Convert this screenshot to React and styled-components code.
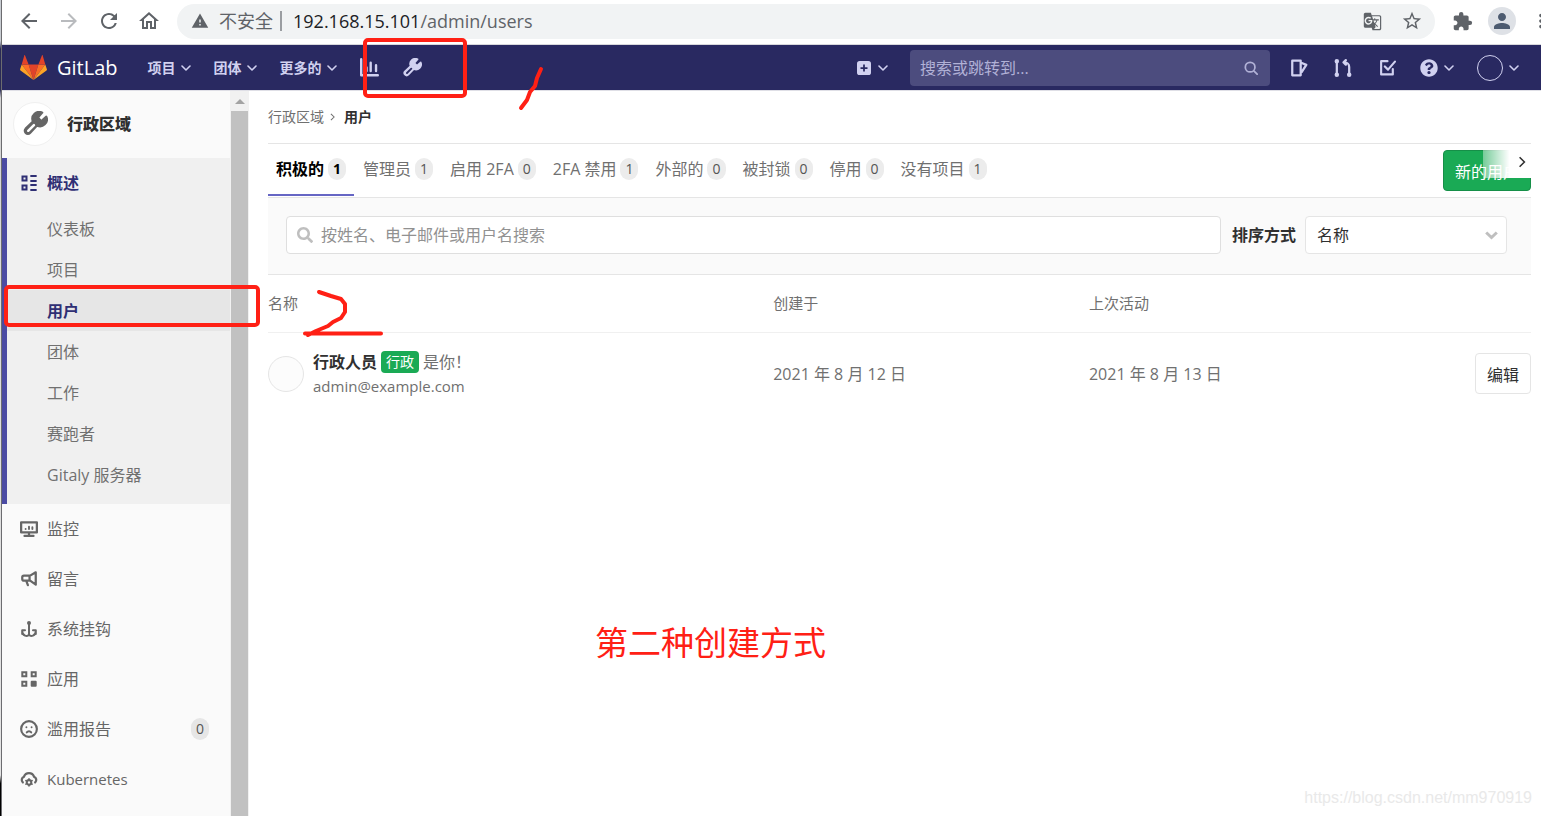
import React, { Component } from 'react';
import styled, { createGlobalStyle } from 'styled-components';
import {
    MdArrowBack, MdArrowForward, MdRefresh, MdOutlineHome, MdWarning,
    MdGTranslate, MdStarBorder, MdExtension, MdPerson, MdMoreVert
} from 'react-icons/md';
import { FaSearch, FaQuestionCircle } from 'react-icons/fa';

const GlobalStyle = createGlobalStyle`
    * { box-sizing: border-box; }
    body {
        margin: 0;
        font-family: "Open Sans", "Noto Sans CJK SC", sans-serif;
        font-size: 16px;
        line-height: 24px;
        color: #303030;
        background: #fff;
    }
    button, input, select { font: inherit; }
    a { color: inherit; text-decoration: none; }
    svg { display: block; flex: none; }
`;

const Page = styled.div`
    position: relative;
    display: flex;
    min-height: 100vh;
    overflow: hidden;
`;

const WindowEdge = styled.div`
    width: 2px;
    flex: none;
    border-right: 1px solid #6c6c70;
    background: linear-gradient(#c9cdd2 5%, #2a2a55 6%, #2a2a55 11%, #d4d4d4 12%, #e4e4e4 95%, #000 96%);
`;

const Screen = styled.div`
    flex: 1;
    min-width: 0;
    display: flex;
    flex-direction: column;
`;

/* browser toolbar */

const BrowserBar = styled.div`
    display: flex;
    align-items: center;
    height: 45px;
    padding: 0 0 2px 15px;
    border-bottom: 1px solid #d8d8dc;
    color: #5f6368;
`;

const BrowserButton = styled.button`
    display: flex;
    padding: 0;
    margin-right: ${ props => props.gap || 16 }px;
    border: 0;
    background: none;
    color: ${ props => props.faded ? '#b9bbbe' : '#5f6368' };
`;

const AddressBar = styled.div`
    flex: 1;
    display: flex;
    align-items: center;
    height: 35px;
    margin-right: 17px;
    padding: 0 11px 0 14px;
    border-radius: 18px;
    background: #f1f3f4;
    font-size: 18px;
`;

const Insecure = styled.span`
    margin-left: 10px;
    padding-right: 7px;
    border-right: 2px solid #9a9da1;
    line-height: 20px;
`;

const Url = styled.span`
    flex: 1;
    margin-left: 11px;

    b {
        font-weight: 400;
        color: #202124;
    }
`;

const Profile = styled.button`
    display: flex;
    align-items: center;
    justify-content: center;
    width: 28px;
    height: 28px;
    margin: 0 22px 0 0;
    padding: 0;
    border: 0;
    border-radius: 50%;
    background: #dee1e6;
    color: #4d5b70;
`;

const MoreClip = styled.div`
    width: 3px;
    overflow: hidden;

    svg { margin-left: -8px; }
`;

/* top navigation */

const NavBar = styled.header`
    display: flex;
    align-items: center;
    height: 46px;
    padding: 0 21px 0 18px;
    background: #292961;
    border-bottom: 1px solid #dfdfe6;
    color: #d1d1f0;
`;

const Brand = styled.a`
    display: flex;
    align-items: center;
    gap: 10px;
    margin-right: 30px;
    color: #fff;
    font-size: 20px;
`;

const NavItem = styled.button`
    display: flex;
    align-items: center;
    gap: ${ props => props.gap || 5 }px;
    padding: 0;
    margin-right: ${ props => props.space || 23 }px;
    border: 0;
    background: none;
    color: #d1d1f0;
    font-size: 14px;
    font-weight: 700;
`;

const Spacer = styled.div`
    flex: 1;
`;

const NavSearch = styled.label`
    display: flex;
    align-items: center;
    width: 360px;
    height: 36px;
    margin-right: 20px;
    padding: 0 12px 0 10px;
    border-radius: 4px;
    background: #4c4c7e;
    color: #b1b1d6;

    input {
        flex: 1;
        min-width: 0;
        padding: 0;
        border: 0;
        outline: 0;
        background: none;
        color: #fff;
    }
    input::placeholder {
        color: #b1b1d6;
    }
`;

const UserCircle = styled.span`
    width: 26px;
    height: 26px;
    border: 1px solid #d1d1f0;
    border-radius: 50%;
`;

/* sidebar */

const Body = styled.div`
    flex: 1;
    display: flex;
`;

const Sidebar = styled.nav`
    width: 228px;
    flex: none;
    background: #fafafa;
    color: #666;
`;

const SidebarHeader = styled.a`
    display: flex;
    align-items: center;
    gap: 10px;
    height: 67px;
    padding: 0 0 2px 11px;
    font-weight: 700;

    strong { color: #303030; }
`;

const AdminBadge = styled.span`
    display: flex;
    align-items: center;
    justify-content: center;
    width: 44px;
    height: 44px;
    border: 1px solid #f0f0f0;
    border-radius: 50%;
    background: #fff;
`;

const Section = styled.div`
    padding-bottom: 9px;
    border-left: 5px solid #4b4ba3;
    background: #f0f0f0;
`;

const MenuItem = styled.a`
    display: flex;
    align-items: center;
    gap: 9px;
    height: 50px;
    padding: 0 21px 0 ${ props => props.active ? 13 : 18 }px;
    font-weight: ${ props => props.active ? 700 : 400 };
    color: ${ props => props.active ? '#2f2f74' : '#666' };
    font-size: ${ props => props.latin ? 15 : 16 }px;
`;

const IconSlot = styled.span`
    display: flex;
    justify-content: center;
    width: 18px;
    flex: none;
`;

const Label = styled.span`
    flex: 1;
`;

const SubItem = styled.a`
    display: flex;
    align-items: center;
    height: 41px;
    padding-left: 40px;
    font-weight: ${ props => props.active ? 700 : 400 };
    color: ${ props => props.active ? '#2f2f74' : '#707070' };
    background: ${ props => props.active ? '#e6e6e6' : 'none' };
`;

const Count = styled.span`
    display: inline-block;
    min-width: 18px;
    padding: 0 5px;
    border-radius: 11px;
    background: ${ props => props.dark ? '#e6e6e6' : '#ececec' };
    color: ${ props => props.active ? '#000' : '#555' };
    font-size: 14px;
    line-height: 22px;
    text-align: center;
`;

const ScrollTrack = styled.div`
    display: flex;
    flex-direction: column;
    align-items: center;
    width: 19px;
    flex: none;
    background: #f1f1f1;
`;

const ScrollArrow = styled.div`
    width: 0;
    margin: 8px 0 7px;
    border: 5px solid transparent;
    border-top: 0;
    border-bottom-color: #a3a3a3;
`;

const ScrollThumb = styled.div`
    flex: 1;
    width: 17px;
    background: #c1c1c1;
`;

/* content */

const Content = styled.main`
    flex: 1;
    min-width: 0;
    padding: 0 10px 0 19px;
`;

const Breadcrumb = styled.div`
    display: flex;
    align-items: center;
    gap: 6px;
    height: 53px;
    border-bottom: 1px solid #e5e5e5;
    font-size: 14px;
    color: #707070;

    strong {
        margin-left: 3px;
        color: #303030;
    }
`;

const TabBar = styled.div`
    position: relative;
    display: flex;
    justify-content: space-between;
    height: 54px;
    border-bottom: 1px solid #e5e5e5;
`;

const Tabs = styled.div`
    display: flex;
    gap: 1px;
`;

const Tab = styled.a`
    display: flex;
    align-items: center;
    gap: 4px;
    height: 52px;
    padding: 0 8px;
    border-bottom: ${ props => props.active ? '2px solid #6666c4' : '2px solid transparent' };
    font-weight: ${ props => props.active ? 700 : 400 };
    color: ${ props => props.active ? '#000' : '#707070' };
`;

const NewUser = styled.button`
    align-self: flex-start;
    height: 41px;
    margin-top: 6px;
    padding: 2px 11px 0;
    border: 1px solid #168f48;
    border-radius: 4px;
    background: #1aaa55;
    color: #fff;
`;

const TabFade = styled.button`
    position: absolute;
    top: 6px;
    right: 0;
    display: flex;
    align-items: center;
    justify-content: flex-end;
    width: 48px;
    height: 28px;
    padding: 0 5px 4px 0;
    border: 0;
    background: linear-gradient(to right, rgba(255, 255, 255, 0.4), #fff 55%);
    color: #303030;
`;

const FilterRow = styled.form`
    display: flex;
    align-items: center;
    height: 77px;
    padding: 0 24px 2px 18px;
    border-bottom: 1px solid #e5e5e5;
    background: #fafafa;

    > label {
        margin: 0 9px 0 11px;
        font-weight: 700;
    }
`;

const SearchField = styled.div`
    flex: 1;
    display: flex;
    align-items: center;
    gap: 8px;
    height: 38px;
    padding: 0 10px;
    border: 1px solid #dfdfdf;
    border-radius: 4px;
    background: #fff;
    color: #bfbfbf;

    input {
        flex: 1;
        padding: 0;
        border: 0;
        outline: 0;
        color: #303030;
    }
    input::placeholder {
        color: #919191;
    }
`;

const SortField = styled.div`
    display: grid;
    align-items: center;
    width: 202px;

    > * { grid-area: 1 / 1; }

    select {
        height: 38px;
        padding: 0 11px;
        border: 1px solid #e5e5e5;
        border-radius: 4px;
        appearance: none;
        background: #fff;
        color: #303030;
    }
    svg {
        justify-self: end;
        margin-right: 9px;
        color: #bfbfbf;
        pointer-events: none;
    }
`;

const UserTable = styled.table`
    width: 100%;
    table-layout: fixed;
    border-collapse: collapse;
    color: #707070;

    th {
        height: 57px;
        padding: 0;
        border-bottom: 1px solid #f0f0f0;
        font-size: 15px;
        font-weight: 400;
        text-align: left;
    }
    th:nth-child(1) { width: 40%; }
    th:nth-child(2) { width: 25%; }
    td {
        height: 83px;
        padding: 0;
    }
    td:last-child { text-align: right; }
`;

const UserCell = styled.div`
    display: flex;
    align-items: center;
    gap: 9px;
`;

const Avatar = styled.span`
    width: 36px;
    height: 36px;
    border: 1px solid #e5e5e5;
    border-radius: 50%;
    background: #fcfcfc;
`;

const UserName = styled.div`
    display: flex;
    align-items: center;
    gap: 4px;

    a {
        color: #303030;
        font-weight: 700;
    }
`;

const RoleBadge = styled.span`
    padding: 0 5px;
    border-radius: 4px;
    background: #1aaa55;
    color: #fff;
    font-size: 14px;
    line-height: 22px;
`;

const Email = styled.a`
    font-size: 15px;
`;

const EditButton = styled.button`
    height: 41px;
    padding: 2px 11px 0;
    border: 1px solid #e5e5e5;
    border-radius: 4px;
    background: #fff;
    color: #303030;
`;

/* hand drawn notes over the page */

const Marker = styled.div`
    position: absolute;
    left: ${ props => props.x }px;
    top: ${ props => props.y }px;
    width: ${ props => props.w }px;
    height: ${ props => props.h }px;
    border: 4px solid #ff2015;
    border-radius: 5px;
    pointer-events: none;
`;

const Scribble = styled.svg`
    position: absolute;
    left: 300px;
    top: 60px;
    fill: none;
    stroke: #ff2015;
    stroke-width: 4;
    stroke-linecap: round;
    stroke-linejoin: round;
    pointer-events: none;
`;

const Note = styled.div`
    position: absolute;
    left: 595px;
    top: 619px;
    color: #ff2015;
    font-size: 33px;
    line-height: 48px;
`;

const Watermark = styled.div`
    position: absolute;
    right: 9px;
    bottom: 6px;
    color: #e9e9e9;
    font-family: "Liberation Sans", sans-serif;
    font-size: 16px;
`;

/* icons */

const Icon = ({ size = 16, children }) => (
    <svg width={ size } height={ size } viewBox="0 0 16 16" fill="none" stroke="currentColor" strokeWidth="2" strokeLinecap="round" strokeLinejoin="round">
        { children }
    </svg>
);

const Caret = () => (
    <svg width="10" height="6" viewBox="0 0 10 6" fill="none" stroke="currentColor" strokeWidth="1.6" strokeLinecap="round" strokeLinejoin="round">
        <path d="M1 1l4 4 4-4" />
    </svg>
);

const SelectCaret = () => (
    <svg width="13" height="9" viewBox="0 0 13 9" fill="none" stroke="currentColor" strokeWidth="3">
        <path d="M1.2 1.5l5.3 5 5.3-5" />
    </svg>
);

const Angle = ({ width, height }) => (
    <svg width={ width } height={ height } viewBox="0 0 6 10" fill="none" stroke="currentColor" strokeWidth="1.3">
        <path d="M1 1l4 4-4 4" />
    </svg>
);

const Wrench = ({ size, slot }) => (
    <svg width={ size } height={ size } viewBox="0 0 24 24" fill="currentColor" stroke="currentColor" strokeWidth="2" strokeLinejoin="round">
        <path d="M15 5.6a1 1 0 0 0 0 1.4l2 2a1 1 0 0 0 1.4 0l4-3.6a6.6 6.6 0 0 1-8.900 8.600l-6.700 7.100a2.900 2.900 0 0 1-4.300-4.200l7-6.800a6.600 6.600 0 0 1 9-8.500z" />
        <path d="M5 19l5.500-5.500" stroke={ slot } strokeWidth="2.4" strokeLinecap="round" />
    </svg>
);

const Tanuki = () => (
    <svg width="27" height="25" viewBox="0 0 27 25">
        <path fill="#e24329" d="M13.5 25L18.4 9.6H8.6z" />
        <path fill="#fc6d26" d="M13.5 25L8.6 9.6H1.7zM13.5 25l4.9-15.4h6.9z" />
        <path fill="#fca326" d="M1.7 9.6L.1 14.2a1 1 0 0 0 .4 1.2L13.5 25zM25.3 9.6l1.6 4.6a1 1 0 0 1-.4 1.2L13.5 25z" />
        <path fill="#e24329" d="M1.7 9.6h6.9L5.1.4c-.2-.5-.6-.5-.8 0zM25.3 9.6h-6.9L21.9.4c.2-.5.6-.5.8 0z" />
    </svg>
);

const OverviewIcon = () => (
    <Icon>
        <path strokeLinejoin="miter" d="M1.5 1.5h4v4h-4zM1.5 10.5h4v4h-4z" />
        <path d="M10 1h5M10 6h5M10 10h5M10 15h5" strokeWidth="1.8" />
    </Icon>
);

const MonitorIcon = () => (
    <Icon size={ 18 }>
        <path d="M1 2h14v9H1zM8 11v3M4 14.2h8" />
        <path d="M5 8v0M8 8V6M11 8V6.5" strokeWidth="1.7" />
    </Icon>
);

const HornIcon = () => (
    <Icon size={ 18 }>
        <path d="M14 2L9 5H3.5A1.5 1.5 0 0 0 2 6.5v1.5A1.5 1.5 0 0 0 3.5 9.5H9l5 3.5zM8.5 5v4.5M5.5 9.500l1.5 4" />
    </Icon>
);

const HookIcon = () => (
    <Icon>
        <circle cx="8" cy="2" r="1" />
        <path d="M8 3v11M1.2 13V9.2H4M14.8 13V9.2H12M1.2 10c0 5 5.300 6 6.800 3.500 1.500 2.500 6.800 1.500 6.800-3.500" />
    </Icon>
);

const AppsIcon = () => (
    <Icon>
        <path strokeLinejoin="miter" d="M1.3 1.3h4v4h-4zM10.7 1.3h4v4h-4zM1.3 10.7h4v4h-4z" />
        <path fill="currentColor" d="M10.7 10.7h4v4h-4z" />
    </Icon>
);

const AbuseIcon = () => (
    <Icon size={ 18 }>
        <circle cx="8" cy="8" r="7" strokeWidth="1.9" />
        <path d="M5.7 6.5v0M10.3 6.5v0M6 11c1-1.4 3-1.4 4 0" strokeWidth="1.7" />
    </Icon>
);

const CloudIcon = () => (
    <Icon size={ 18 }>
        <path d="M2.5 11A3 3 0 0 1 3.5 6 4.8 4.8 0 0 1 12.5 6 3 3 0 0 1 13.5 11" />
        <circle cx="8" cy="11" r="2" strokeWidth="1.8" />
        <path d="M8 7.8v1M8 13.2v1M5.2 9.4l.9.5M9.9 12.1l.9.5M10.8 9.4l-.9.5M6.1 12.1l-.9.5" strokeWidth="1.4" />
    </Icon>
);

const subItems = ['仪表板', '项目', '用户', '团体', '工作', '赛跑者', 'Gitaly 服务器'];

const menuItems = [
    { label: '监控', icon: MonitorIcon },
    { label: '留言', icon: HornIcon },
    { label: '系统挂钩', icon: HookIcon },
    { label: '应用', icon: AppsIcon },
    { label: '滥用报告', icon: AbuseIcon, count: 0 },
    { label: 'Kubernetes', icon: CloudIcon, latin: true }
];

const tabs = [
    ['积极的', 1], ['管理员', 1], ['启用 2FA', 0], ['2FA 禁用', 1],
    ['外部的', 0], ['被封锁', 0], ['停用', 0], ['没有项目', 1]
];

const Browser = () => (
    <BrowserBar>
        <BrowserButton aria-label="后退"><MdArrowBack size={ 24 } /></BrowserButton>
        <BrowserButton aria-label="前进" faded><MdArrowForward size={ 24 } /></BrowserButton>
        <BrowserButton aria-label="刷新"><MdRefresh size={ 24 } /></BrowserButton>
        <BrowserButton aria-label="主页"><MdOutlineHome size={ 24 } /></BrowserButton>
        <AddressBar>
            <MdWarning size={ 18 } />
            <Insecure>不安全</Insecure>
            <Url><b>192.168.15.101</b>/admin/users</Url>
            <BrowserButton aria-label="翻译" gap={ 19 }><MdGTranslate size={ 19 } /></BrowserButton>
            <BrowserButton aria-label="收藏" gap={ 1 }><MdStarBorder size={ 22 } /></BrowserButton>
        </AddressBar>
        <BrowserButton aria-label="扩展" gap={ 15 }><MdExtension size={ 21 } /></BrowserButton>
        <Profile aria-label="用户资料"><MdPerson size={ 24 } /></Profile>
        <MoreClip><MdMoreVert size={ 22 } /></MoreClip>
    </BrowserBar>
);

const TopNav = () => (
    <NavBar>
        <Brand href="#"><Tanuki />GitLab</Brand>
        <NavItem>项目<Caret /></NavItem>
        <NavItem>团体<Caret /></NavItem>
        <NavItem>更多的<Caret /></NavItem>
        <NavItem aria-label="分析" space={ 24 }>
            <Icon size={ 19 }><path d="M1 1v13.5h14M5.5 8v3M9 4v7M13.5 6v5" /></Icon>
        </NavItem>
        <NavItem aria-label="管理"><Wrench size={ 19 } slot="#292961" /></NavItem>
        <Spacer />
        <NavItem aria-label="新建" gap={ 7 } space={ 22 }>
            <svg width="14" height="14" viewBox="0 0 16 16">
                <path fill="currentColor" fillRule="evenodd" d="M3 0h10a3 3 0 0 1 3 3v10a3 3 0 0 1-3 3H3a3 3 0 0 1-3-3V3a3 3 0 0 1 3-3zm4 4v3H4v2h3v3h2V9h3V7H9V4z" />
            </svg>
            <Caret />
        </NavItem>
        <NavSearch>
            <input type="text" aria-label="搜索" placeholder="搜索或跳转到..." />
            <Icon size={ 14 }><circle cx="7" cy="7" r="5.5" /><path d="M11.5 11.5L15 15" /></Icon>
        </NavSearch>
        <NavItem aria-label="议题" space={ 26 }>
            <Icon size={ 18 }><path d="M2 1.500h7.5v13H2zM10.500 3.500l4 1.700-4 6.300" /></Icon>
        </NavItem>
        <NavItem aria-label="合并请求" space={ 27 }>
            <Icon size={ 18 }>
                <path d="M2.5 2v12M13.5 14V7a4 4 0 0 0-4-4H8.5M10.5 1l-2 2 2 2" />
                <circle cx="2.5" cy="2" r="1" /><circle cx="2.5" cy="14" r="1" /><circle cx="13.5" cy="14" r="1" />
            </Icon>
        </NavItem>
        <NavItem aria-label="待办事项" space={ 24 }>
            <Icon size={ 17 }><path d="M8 2H2v12.5h11V9.5M5.5 7l3 3L15 2.5" /></Icon>
        </NavItem>
        <NavItem aria-label="帮助" gap={ 6 }><FaQuestionCircle size={ 18 } /><Caret /></NavItem>
        <NavItem aria-label="账户" gap={ 6 } space={ 1 }><UserCircle /><Caret /></NavItem>
    </NavBar>
);

const SideMenu = () => (
    <Sidebar>
        <SidebarHeader href="#">
            <AdminBadge><Wrench size={ 25 } slot="#fff" /></AdminBadge>
            <strong>行政区域</strong>
        </SidebarHeader>
        <Section>
            <MenuItem href="#" active><IconSlot><OverviewIcon /></IconSlot><Label>概述</Label></MenuItem>
            { subItems.map(item => (
                <SubItem key={ item } href="#" active={ item === '用户' }>{ item }</SubItem>
            )) }
        </Section>
        { menuItems.map(({ label, icon: ItemIcon, count, latin }) => (
            <MenuItem key={ label } href="#" latin={ latin }>
                <IconSlot><ItemIcon /></IconSlot>
                <Label>{ label }</Label>
                { count !== undefined ? <Count dark>{ count }</Count> : null }
            </MenuItem>
        )) }
    </Sidebar>
);

class Users extends Component {
    state = {
        query: ''
    };

    handleChange = (e) => {
        this.setState({ query: e.target.value });
    };

    render() {
        return (
            <Content>
                <Breadcrumb>
                    <a href="#">行政区域</a>
                    <Angle width={ 5 } height={ 8 } />
                    <strong>用户</strong>
                </Breadcrumb>
                <TabBar>
                    <Tabs>
                        { tabs.map(([name, count], i) => (
                            <Tab key={ name } href="#" active={ i === 0 }>
                                { name }<Count active={ i === 0 }>{ count }</Count>
                            </Tab>
                        )) }
                    </Tabs>
                    <NewUser>新的用户</NewUser>
                    <TabFade aria-label="更多标签"><Angle width={ 8 } height={ 12 } /></TabFade>
                </TabBar>
                <FilterRow>
                    <SearchField>
                        <FaSearch size={ 16 } />
                        <input
                            type="text"
                            aria-label="搜索用户"
                            placeholder="按姓名、电子邮件或用户名搜索"
                            value={ this.state.query }
                            onChange={ this.handleChange }
                        />
                    </SearchField>
                    <label htmlFor="sort">排序方式</label>
                    <SortField>
                        <select id="sort"><option>名称</option></select>
                        <SelectCaret />
                    </SortField>
                </FilterRow>
                <UserTable>
                    <thead>
                        <tr><th>名称</th><th>创建于</th><th>上次活动</th><th aria-label="操作" /></tr>
                    </thead>
                    <tbody>
                        <tr>
                            <td>
                                <UserCell>
                                    <Avatar />
                                    <div>
                                        <UserName><a href="#">行政人员</a><RoleBadge>行政</RoleBadge>是你！</UserName>
                                        <Email href="#">admin@example.com</Email>
                                    </div>
                                </UserCell>
                            </td>
                            <td>2021 年 8 月 12 日</td>
                            <td>2021 年 8 月 13 日</td>
                            <td><EditButton>编辑</EditButton></td>
                        </tr>
                    </tbody>
                </UserTable>
            </Content>
        );
    }
}

const App = () => (
    <Page>
        <GlobalStyle />
        <WindowEdge />
        <Screen>
            <Browser />
            <TopNav />
            <Body>
                <SideMenu />
                <ScrollTrack><ScrollArrow /><ScrollThumb /></ScrollTrack>
                <Users />
            </Body>
        </Screen>
        <Marker x={ 363 } y={ 38 } w={ 104 } h={ 60 } />
        <Marker x={ 4 } y={ 285 } w={ 256 } h={ 42 } />
        <Scribble width="260" height="290" viewBox="300 60 260 290">
            <path d="M541 69l-4 9-2 8-5 6-3 8-6 8" />
            <path d="M319 292l12 4 10 3 4 5v8l-4 6-8 4-5 4-12 5-8 4M305 333.5h76" />
        </Scribble>
        <Note>第二种创建方式</Note>
        <Watermark>https://blog.csdn.net/mm970919</Watermark>
    </Page>
);

export default App;
